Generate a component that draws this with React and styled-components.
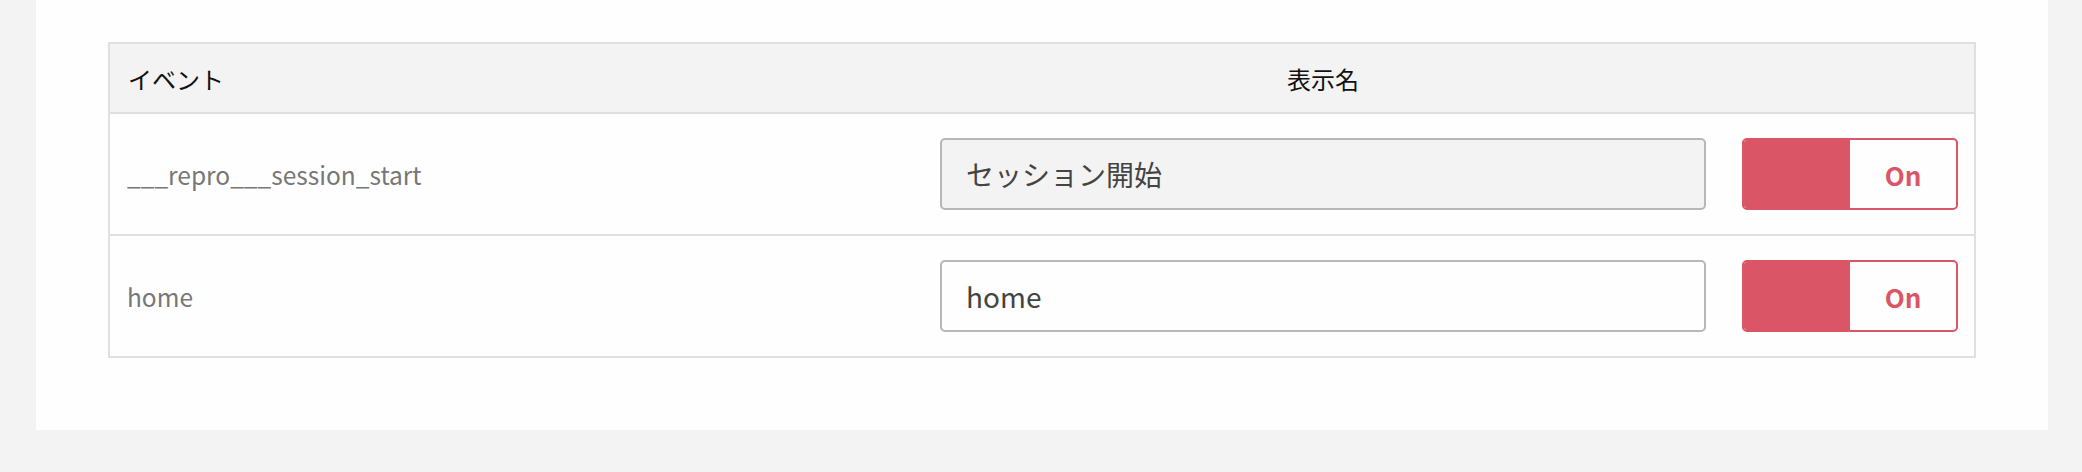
import React from 'react'
import styled, { createGlobalStyle } from 'styled-components'

const GlobalStyle = createGlobalStyle`
  html, body {
    margin: 0;
    padding: 0;
    background: #f3f3f3;
    font-family: "Noto Sans CJK JP", "Noto Sans", sans-serif;
  }
`;

const Page = styled.div`
  padding: 0 34px 0 36px;
`;

const Panel = styled.section`
  background: #fefefe;
  padding: 42px 72px 72px;
`;

const Table = styled.div`
  border: 2px solid #e0e0e0;
  background: #fefefe;
`;

const Row = styled.div`
  display: grid;
  grid-template-columns: 812px 802px 1fr;
  align-items: center;
  min-height: ${(p) => (p.$head ? '68px' : '120px')};
  background: ${(p) => (p.$head ? '#f3f3f3' : '#fefefe')};
  & + & {
    border-top: 2px solid #e0e0e0;
  }
`;

const HeadCell = styled.div`
  padding: 0 18px;
  font-size: 24px;
  color: #111;
  text-align: ${(p) => p.$align || 'left'};
`;

const EventName = styled.div`
  padding: 0 17px;
  font-size: 24.5px;
  color: #777;
`;

const Cell = styled.div`
  padding: 0 18px;
  display: flex;
  align-items: center;
`;

const NameInput = styled.input`
  box-sizing: border-box;
  width: 100%;
  height: 72px;
  padding: 0 24px;
  border: 2px solid #b7b7b9;
  border-radius: 5px;
  background: ${(p) => (p.disabled ? '#f3f3f3' : '#fefefe')};
  font-family: "Noto Sans CJK JP", "Noto Sans", sans-serif;
  font-size: 28px;
  color: #444;
  outline: none;
  &:disabled {
    color: #444;
    -webkit-text-fill-color: #444;
  }
`;

const Toggle = styled.button`
  box-sizing: border-box;
  display: grid;
  grid-template-columns: 1fr 1fr;
  width: 216px;
  height: 72px;
  padding: 0;
  border: 2px solid #da5667;
  border-radius: 5px;
  background: #fefefe;
  overflow: hidden;
  cursor: pointer;
`;

const Knob = styled.span`
  background: #da5667;
`;

const ToggleLabel = styled.span`
  display: flex;
  align-items: center;
  justify-content: center;
  font-family: "Noto Sans CJK JP", "Noto Sans", sans-serif;
  font-weight: 700;
  font-size: 26px;
  color: #da5667;
`;

const events = [
  { id: '___repro___session_start', label: 'セッション開始', locked: true, on: true },
  { id: 'home', label: 'home', locked: false, on: true },
];

export default function App() {
  return (
    <Page>
      <GlobalStyle />
      <Panel>
        <Table>
          <Row $head>
            <HeadCell>イベント</HeadCell>
            <HeadCell $align="center">表示名</HeadCell>
            <HeadCell />
          </Row>
          {events.map((ev) => (
            <Row key={ev.id}>
              <EventName>{ev.id}</EventName>
              <Cell>
                <NameInput defaultValue={ev.label} disabled={ev.locked} />
              </Cell>
              <Cell>
                <Toggle type="button">
                  <Knob />
                  <ToggleLabel>{ev.on ? 'On' : 'Off'}</ToggleLabel>
                </Toggle>
              </Cell>
            </Row>
          ))}
        </Table>
      </Panel>
    </Page>
  );
}
